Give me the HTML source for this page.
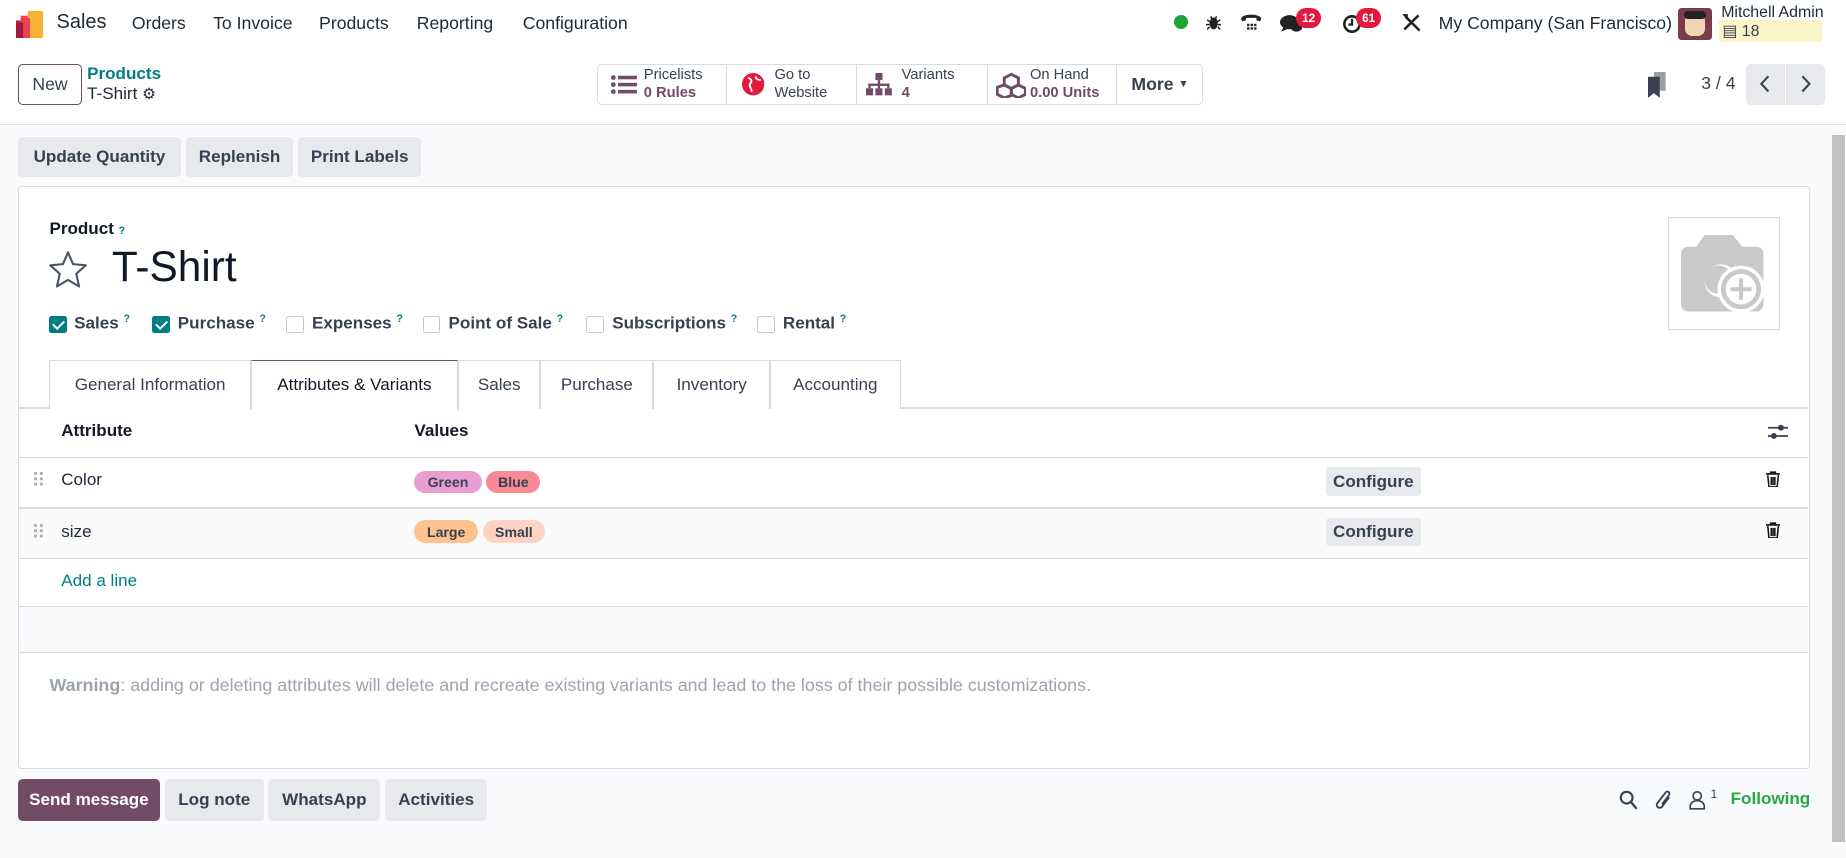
<!DOCTYPE html>
<html><head><meta charset="utf-8"><style>
html{zoom:1.1773}
*{box-sizing:border-box;margin:0;padding:0}
body{width:1568px;height:729px;overflow:hidden;background:#f9fafb;font-family:"Liberation Sans",sans-serif;font-size:14px;color:#374151;position:relative}
.a{position:absolute}
.nav{left:0;top:0;width:1568px;height:40px;background:#fff}
.cp{left:0;top:40px;width:1568px;height:66px;background:#fff;border-bottom:1px solid #dee2e6}
.t{position:absolute;white-space:nowrap}
.btn{position:absolute;background:#e7e9ed;border-radius:4px;font-weight:bold;color:#374151;font-size:14.5px;display:flex;align-items:center;justify-content:center}
.stat{position:absolute;top:0;height:34px;border-right:1px solid #d8dadd;display:flex;align-items:center;font-size:12.5px;line-height:15px;color:#374151}
.stat b{color:#714b67}
.card{left:15px;top:158px;width:1522px;height:495px;background:#fff;border:1px solid #d8dadd;border-radius:3px}
.cb{position:absolute;top:268px;width:15px;height:15px;border:1px solid #c6c9ce;border-radius:2px;background:#fff}
.cb.on{background:#017e84;border-color:#017e84}
.cb.on:after{content:"";position:absolute;left:4px;top:1px;width:4px;height:8px;border:solid #fff;border-width:0 2px 2px 0;transform:rotate(45deg)}
.cl{position:absolute;top:266px;font-size:14.5px;font-weight:bold;color:#374151}
.cl sup,.q{color:#017e84;font-size:9px;font-weight:bold}
.tab{position:absolute;top:306px;height:41px;border:1px solid #d8dadd;border-bottom:none;display:flex;align-items:center;justify-content:center;font-size:14.5px;color:#374151;background:#fff}
.tag{position:absolute;height:19px;border-radius:10px;font-size:12px;font-weight:bold;color:#374151;display:flex;align-items:center;justify-content:center}
.hl{position:absolute;left:16px;width:1520px;height:1px;background:#d8dadd}
.badge{position:absolute;top:7px;height:17px;border-radius:9px;background:#e4173d;color:#fff;font-size:10px;font-weight:bold;display:flex;align-items:center;justify-content:center;padding:0 5px}
.drag{position:absolute;width:8px;height:12px}
</style></head><body>
<div class="a nav">
 <svg class="a" style="left:14px;top:9px" width="24" height="23" viewBox="0 0 24 23"><rect x="0" y="8" width="8" height="15" fill="#c4253f"/><rect x="4" y="4" width="8" height="19" fill="#f0464e"/><rect x="10" y="0" width="13" height="23" rx="1" fill="#f9b234"/><rect x="4" y="6" width="8" height="17" fill="#e64354"/><rect x="0" y="10" width="6" height="13" fill="#a11b3f"/></svg>
 <div class="t" style="left:48px;top:9px;font-size:17px;color:#1f2937">Sales</div>
 <div class="t" style="left:112px;top:11px;font-size:15px;color:#1f2937">Orders</div>
 <div class="t" style="left:181px;top:11px;font-size:15px;color:#1f2937">To Invoice</div>
 <div class="t" style="left:271px;top:11px;font-size:15px;color:#1f2937">Products</div>
 <div class="t" style="left:354px;top:11px;font-size:15px;color:#1f2937">Reporting</div>
 <div class="t" style="left:444px;top:11px;font-size:15px;color:#1f2937">Configuration</div>
 <div class="a" style="left:997px;top:13px;width:12px;height:12px;border-radius:6px;background:#21a336"></div>
 <svg class="a" style="left:1024px;top:12px" width="13" height="14" viewBox="0 0 13 14"><ellipse cx="6.5" cy="8" rx="3.5" ry="5" fill="#222"/><path d="M1 5l3 2M12 5l-3 2M0 9h3M10 9h3M1 13l2-2M12 13l-2-2M4 2l1 2M9 2l-1 2" stroke="#222" stroke-width="1.3"/></svg>
 <svg class="a" style="left:1053px;top:10px" width="19" height="18" viewBox="0 0 19 18"><path d="M1 6c0-5 17-5 17 0l-1 2-3-1V5H5v2L2 8z" fill="#222"/><g fill="#222"><rect x="6" y="10" width="2" height="2"/><rect x="9" y="10" width="2" height="2"/><rect x="12" y="10" width="2" height="2"/><rect x="6" y="13" width="2" height="2"/><rect x="9" y="13" width="2" height="2"/><rect x="12" y="13" width="2" height="2"/></g></svg>
 <svg class="a" style="left:1087px;top:12px" width="20" height="17" viewBox="0 0 20 17"><ellipse cx="8" cy="7" rx="8" ry="6" fill="#222"/><path d="M3 11l-2 4 5-2z" fill="#222"/><ellipse cx="14" cy="11" rx="5" ry="4" fill="#222"/></svg>
 <div class="badge" style="left:1101px">12</div>
 <svg class="a" style="left:1140px;top:12px" width="17" height="17" viewBox="0 0 17 17"><circle cx="8.5" cy="8.5" r="6.5" fill="none" stroke="#222" stroke-width="2.2"/><path d="M8.5 4v5h-3" stroke="#222" stroke-width="2" fill="none"/></svg>
 <div class="badge" style="left:1152px">61</div>
 <svg class="a" style="left:1191px;top:11px" width="17" height="17" viewBox="0 0 17 17"><path d="M3 3l12 12M14 2L2 14" stroke="#222" stroke-width="2.2"/><path d="M0 1l5 0 0 5z" fill="#222"/></svg>
 <div class="t" style="left:1222px;top:11px;font-size:15px;color:#1f2937">My Company (San Francisco)</div>
 <div class="a" style="left:1425px;top:7px;width:29px;height:27px;border-radius:3px;background:#7a3b4b"><div class="a" style="left:6px;top:5px;width:17px;height:19px;border-radius:6px;background:#f2d3b3"></div><div class="a" style="left:5px;top:2px;width:19px;height:7px;border-radius:4px;background:#222"></div></div>
 <div class="t" style="left:1462px;top:3px;font-size:13.5px;color:#1f2937">Mitchell Admin</div>
 <div class="a" style="left:1460px;top:17px;width:88px;height:19px;background:#fdf3c8"></div>
 <div class="t" style="left:1463px;top:18px;font-size:13.5px;color:#374151">&#9636; 18</div>
</div>
<div class="a cp">
 <div class="a" style="left:15px;top:14px;width:55px;height:35px;border:1px solid #714b67;border-radius:4px;display:flex;align-items:center;justify-content:center;font-size:15px;color:#374151">New</div>
 <div class="t" style="left:74px;top:14px;font-size:14.5px;font-weight:bold;color:#017e84">Products</div>
 <div class="t" style="left:74px;top:31px;font-size:14.5px;color:#1f2937">T-Shirt <span style="font-size:13px">&#9881;</span></div>
 <div class="a" style="left:507px;top:14px;width:515px;height:35px;border:1px solid #d8dadd;border-radius:4px;background:#fff">
  <div class="stat" style="left:0;width:110px"><svg style="margin:0 6px 0 11px" width="22" height="18" viewBox="0 0 22 18"><g fill="#714b67"><circle cx="2" cy="3" r="2"/><circle cx="2" cy="9" r="2"/><circle cx="2" cy="15" r="2"/><rect x="6" y="1.5" width="16" height="3"/><rect x="6" y="7.5" width="16" height="3"/><rect x="6" y="13.5" width="16" height="3"/></g></svg><div>Pricelists<br><b>0 Rules</b></div></div>
  <div class="stat" style="left:110px;width:110px"><svg style="margin:0 9px 0 12px" width="19" height="19" viewBox="0 0 19 19"><circle cx="9.5" cy="9.5" r="9.5" fill="#e4173d"/><path d="M5 4c3 1 4 3 2 5s2 4 1 7M12 3c-1 2 2 3 4 3" stroke="#fff" stroke-width="1.6" fill="none"/></svg><div>Go to<br>Website</div></div>
  <div class="stat" style="left:220px;width:111px"><svg style="margin:0 8px 0 8px" width="22" height="19" viewBox="0 0 22 19"><g fill="#714b67"><rect x="8" y="0" width="6" height="6"/><rect x="0" y="13" width="6" height="6"/><rect x="8" y="13" width="6" height="6"/><rect x="16" y="13" width="6" height="6"/><rect x="10" y="6" width="2" height="7"/><rect x="2" y="9" width="18" height="2"/><rect x="2" y="9" width="2" height="4"/><rect x="18" y="9" width="2" height="4"/></g></svg><div>Variants<br><b>4</b></div></div>
  <div class="stat" style="left:331px;width:110px"><svg style="margin:0 3px 0 7px" width="26" height="22" viewBox="0 0 26 22"><g fill="none" stroke="#714b67" stroke-width="2.5"><path d="M13 2l6 3v6l-6 3-6-3V5z"/><path d="M7 11l6 3v6l-6 2-6-3v-6z"/><path d="M19 11l6 3v5l-6 3-6-3v-5z"/></g></svg><div>On Hand<br><b>0.00 Units</b></div></div>
  <div class="stat" style="left:441px;width:73px;border:none;justify-content:center;font-size:15px;font-weight:bold">More <span style="font-size:9px;margin-left:4px">&#9660;</span></div>
 </div>
 <svg class="a" style="left:1400px;top:21px" width="16" height="22" viewBox="0 0 16 22"><rect x="5" y="0" width="10" height="16" fill="#9aa0a8"/><path d="M0 4h10v18l-5-4-5 4z" fill="#374151"/></svg>
 <div class="t" style="left:1445px;top:22px;font-size:15px;color:#374151">3 / 4</div>
 <div class="a" style="left:1483px;top:14px;width:33px;height:35px;background:#e7e9ed;border-radius:4px 0 0 4px"><svg style="margin:10px 11px" width="10" height="15" viewBox="0 0 10 15"><path d="M8 1L2 7.5 8 14" stroke="#374151" stroke-width="1.8" fill="none"/></svg></div>
 <div class="a" style="left:1517px;top:14px;width:33px;height:35px;background:#e7e9ed;border-radius:0 4px 4px 0"><svg style="margin:10px 12px" width="10" height="15" viewBox="0 0 10 15"><path d="M2 1l6 6.5L2 14" stroke="#374151" stroke-width="1.8" fill="none"/></svg></div>
</div>
<div class="a" style="left:1556px;top:115px;width:11px;height:600px;background:#c1c1c1"></div>
<div class="btn" style="left:15px;top:116px;width:139px;height:34px">Update Quantity</div>
<div class="btn" style="left:158px;top:116px;width:91px;height:34px">Replenish</div>
<div class="btn" style="left:253px;top:116px;width:105px;height:34px">Print Labels</div>
<div class="a card"></div>
<div class="t" style="left:42px;top:186px;font-size:14.5px;font-weight:bold;color:#111827">Product <span class="q">?</span></div>
<svg class="a" style="left:41px;top:212px" width="34" height="33" viewBox="0 0 34 33"><path d="M17 2l4.3 10 10.7 1-8 7.3 2.4 10.7L17 25.4 7.6 31l2.4-10.7-8-7.3 10.7-1z" fill="none" stroke="#4b5563" stroke-width="1.8" stroke-linejoin="round"/></svg>
<div class="t" style="left:95px;top:206px;font-size:36px;color:#111827">T-Shirt</div>
<div class="cb on" style="left:42px"></div><div class="cl" style="left:63px">Sales <sup>?</sup></div>
<div class="cb on" style="left:129px"></div><div class="cl" style="left:151px">Purchase <sup>?</sup></div>
<div class="cb" style="left:243px"></div><div class="cl" style="left:265px">Expenses <sup>?</sup></div>
<div class="cb" style="left:359px"></div><div class="cl" style="left:381px">Point of Sale <sup>?</sup></div>
<div class="cb" style="left:498px"></div><div class="cl" style="left:520px">Subscriptions <sup>?</sup></div>
<div class="cb" style="left:643px"></div><div class="cl" style="left:665px">Rental <sup>?</sup></div>
<div class="a" style="left:1417px;top:184px;width:95px;height:96px;border:1px solid #d8dadd"><svg style="margin:15px 0 0 10px" width="75" height="68" viewBox="0 0 75 68"><path d="M20 0h24l8 10h12a6 6 0 016 6v43a6 6 0 01-6 6H6a6 6 0 01-6-6V16a6 6 0 016-6h7z" fill="#c9c9c9"/><circle cx="34" cy="39" r="14" fill="#fff"/><circle cx="32" cy="38" r="12" fill="#c9c9c9"/><circle cx="51" cy="46" r="20" fill="#fff"/><circle cx="51" cy="46" r="17" fill="#c9c9c9"/><circle cx="51" cy="46" r="13" fill="#fff"/><path d="M51 37v18M42 46h18" stroke="#c9c9c9" stroke-width="3.5"/></svg></div>
<div class="hl" style="top:346px"></div>
<div class="tab" style="left:42px;width:171px">General Information</div>
<div class="tab" style="left:213px;width:176px;height:42px;border-top:1px solid #714b67;color:#111827">Attributes &amp; Variants</div>
<div class="tab" style="left:389px;width:70px">Sales</div>
<div class="tab" style="left:459px;width:96px">Purchase</div>
<div class="tab" style="left:555px;width:99px">Inventory</div>
<div class="tab" style="left:654px;width:111px">Accounting</div>
<div class="t" style="left:52px;top:358px;font-size:14.5px;font-weight:bold;color:#111827">Attribute</div>
<div class="t" style="left:352px;top:358px;font-size:14.5px;font-weight:bold;color:#111827">Values</div>
<svg class="a" style="left:1502px;top:359px" width="17" height="15" viewBox="0 0 17 15"><path d="M0 4h17M0 11h17" stroke="#374151" stroke-width="1.5"/><circle cx="11" cy="4" r="2.5" fill="#374151"/><circle cx="5" cy="11" r="2.5" fill="#374151"/></svg>
<div class="hl" style="top:388px"></div>
<div class="a" style="left:16px;top:432px;width:1520px;height:42px;background:#fafafa"></div>
<div class="hl" style="top:431px"></div>
<div class="hl" style="top:474px"></div>
<div class="a" style="left:16px;top:515px;width:1520px;height:39px;background:#f9fafb"></div>
<div class="hl" style="top:515px"></div>
<div class="hl" style="top:554px"></div>
<svg class="drag" style="left:29px;top:401px" viewBox="0 0 8 12"><g fill="#adb1b8"><rect x="0" y="0" width="2.5" height="2.5"/><rect x="5" y="0" width="2.5" height="2.5"/><rect x="0" y="4.5" width="2.5" height="2.5"/><rect x="5" y="4.5" width="2.5" height="2.5"/><rect x="0" y="9" width="2.5" height="2.5"/><rect x="5" y="9" width="2.5" height="2.5"/></g></svg>
<svg class="drag" style="left:29px;top:445px" viewBox="0 0 8 12"><g fill="#adb1b8"><rect x="0" y="0" width="2.5" height="2.5"/><rect x="5" y="0" width="2.5" height="2.5"/><rect x="0" y="4.5" width="2.5" height="2.5"/><rect x="5" y="4.5" width="2.5" height="2.5"/><rect x="0" y="9" width="2.5" height="2.5"/><rect x="5" y="9" width="2.5" height="2.5"/></g></svg>
<div class="t" style="left:52px;top:399px;font-size:14.5px;color:#1f2937">Color</div>
<div class="t" style="left:52px;top:443px;font-size:14.5px;color:#1f2937">size</div>
<div class="tag" style="left:352px;top:400px;width:57px;background:#e99ed2">Green</div>
<div class="tag" style="left:413px;top:400px;width:46px;background:#f78a94">Blue</div>
<div class="tag" style="left:352px;top:442px;width:54px;background:#fec28f">Large</div>
<div class="tag" style="left:410px;top:442px;width:53px;background:#fed3c4">Small</div>
<div class="btn" style="left:1126px;top:397px;width:81px;height:24px;border-radius:3px">Configure</div>
<div class="btn" style="left:1126px;top:440px;width:81px;height:24px;border-radius:3px">Configure</div>
<svg class="a" style="left:1500px;top:400px" width="12" height="14" viewBox="0 0 12 14"><path d="M0 2.5h12M4 2.5V1h4v1.5M1.5 3.5l1 10h7l1-10M4.5 5v7M6 5v7M7.5 5v7" stroke="#111" stroke-width="1.3" fill="none"/></svg>
<svg class="a" style="left:1500px;top:443px" width="12" height="14" viewBox="0 0 12 14"><path d="M0 2.5h12M4 2.5V1h4v1.5M1.5 3.5l1 10h7l1-10M4.5 5v7M6 5v7M7.5 5v7" stroke="#111" stroke-width="1.3" fill="none"/></svg>
<div class="t" style="left:52px;top:485px;font-size:14.5px;color:#017e84">Add a line</div>
<div class="t" style="left:42px;top:573px;font-size:15.2px;color:#9ca3af"><b>Warning</b>: adding or deleting attributes will delete and recreate existing variants and lead to the loss of their possible customizations.</div>
<div class="btn" style="left:15px;top:662px;width:121px;height:35px;background:#714b67;color:#fff">Send message</div>
<div class="btn" style="left:140px;top:662px;width:84px;height:35px">Log note</div>
<div class="btn" style="left:228px;top:662px;width:95px;height:35px">WhatsApp</div>
<div class="btn" style="left:327px;top:662px;width:87px;height:35px">Activities</div>
<svg class="a" style="left:1375px;top:671px" width="16" height="17" viewBox="0 0 16 17"><circle cx="6.5" cy="6.5" r="5" fill="none" stroke="#374151" stroke-width="1.8"/><path d="M10 10l5 6" stroke="#374151" stroke-width="2"/></svg>
<svg class="a" style="left:1406px;top:670px" width="16" height="19" viewBox="0 0 16 19"><path d="M12 7l-6 8a2.5 2.5 0 01-4-3l7-9a1.8 1.8 0 013 2l-6 8" stroke="#374151" stroke-width="1.6" fill="none"/></svg>
<svg class="a" style="left:1435px;top:671px" width="14" height="17" viewBox="0 0 14 17"><circle cx="7" cy="5" r="3.5" fill="none" stroke="#374151" stroke-width="1.4"/><path d="M1 16v-2a6 5 0 0112 0v2z" fill="none" stroke="#374151" stroke-width="1.4"/></svg>
<div class="t" style="left:1453px;top:669px;font-size:10px;color:#374151">1</div>
<div class="t" style="left:1470px;top:670px;font-size:14.5px;font-weight:bold;color:#28a745">Following</div>
</body></html>
